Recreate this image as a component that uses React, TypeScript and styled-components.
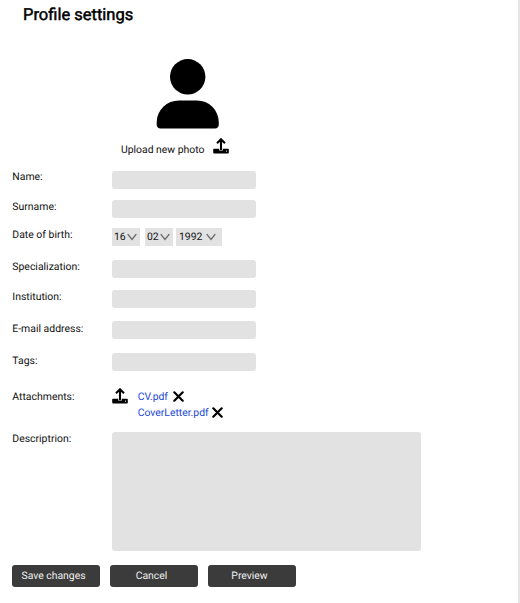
import React from "react";
import styled, { createGlobalStyle } from "styled-components";

const GlobalStyle = createGlobalStyle`
  * { box-sizing: border-box; }
  body { margin: 0; background: #fff; color: #111; font-family: Roboto, sans-serif; font-size: 10.4px; text-rendering: geometricPrecision; }
`;

const Page = styled.main`
  width: 520px;
  height: 603px;
  padding: 4px 0 0 12px;
  border-right: 2px solid #e6e6e6;
  overflow: hidden;
`;

const Title = styled.h1`
  height: 22px;
  margin: 0 0 0 11px;
  color: #000;
  font-size: 16.5px;
  font-weight: 400;
  line-height: 24px;
  -webkit-text-stroke: 0.5px #000;
`;

const PhotoSection = styled.section`
  display: flex;
  flex-direction: column;
  height: 144px;
  padding-top: 33px;
`;

const Avatar = styled.svg`
  display: block;
  width: 64px;
  height: 71px;
  margin-left: 144px;
`;

const UploadPhoto = styled.div`
  display: flex;
  align-items: flex-start;
  gap: 9px;
  margin: 8px 0 0 109px;
`;

const UploadLabel = styled.span`
  width: 83px;
  margin-top: 5px;
  line-height: 14px;
  white-space: nowrap;
`;

const Row = styled.div<{ $height: number }>`
  display: grid;
  grid-template-columns: 100px 1fr;
  align-items: start;
  height: ${({ $height }) => $height}px;
`;

const Label = styled.label<{ $drop?: number }>`
  padding-top: ${({ $drop = 1 }) => $drop}px;
  padding-left: 0.3px;
  line-height: 14px;
  font-size: 10.45px;
`;

const Input = styled.input<{ $top: number }>`
  width: 143.5px;
  height: 18px;
  margin: ${({ $top }) => $top}px 0 0;
  padding: 0 4px;
  border: 0;
  border-radius: 3px;
  background: #e2e2e2;
`;

const DateGroup = styled.div`
  display: flex;
  padding-top: 1px;
`;

const DatePart = styled.button<{ $width: number; $gap: number; $inset: number; $space: number }>`
  display: flex;
  align-items: center;
  gap: ${({ $space }) => $space}px;
  width: ${({ $width }) => $width}px;
  height: 18px;
  margin: 0 ${({ $gap }) => $gap}px 0 0;
  padding: 0 0 0 ${({ $inset }) => $inset}px;
  border: 0;
  background: #e2e2e2;
  color: #111;
  font: 10.4px/14px Roboto, sans-serif;
  text-rendering: geometricPrecision;
`;

const ChevronSvg = styled.svg`
  flex: none;
  width: 10px;
  height: 8px;
`;

const Attachments = styled.div`
  display: flex;
  align-items: flex-start;
  gap: 9.7px;
  margin-top: -1px;
`;

const FileList = styled.ul`
  margin: 1px 0 0;
  padding: 0;
  list-style: none;
`;

const FileItem = styled.li<{ $gap: number }>`
  display: flex;
  align-items: center;
  gap: ${({ $gap }) => $gap}px;
  height: 15.5px;
  color: #2148d8;
  line-height: 15px;
`;

const UploadSvg = styled.svg`
  display: block;
  flex: none;
  width: 16px;
  height: 16px;
`;

const CrossSvg = styled.svg`
  width: 11px;
  height: 11px;
`;

const Description = styled.textarea`
  width: 309px;
  height: 119px;
  margin: 1px 0 0;
  border: 0;
  border-radius: 3px;
  background: #e2e2e2;
  resize: none;
`;

const Actions = styled.div`
  display: flex;
  gap: 10px;
`;

const ActionButton = styled.button`
  width: 88px;
  height: 22px;
  padding: 0 5px 0 0;
  border: 0;
  border-radius: 3px;
  background: #3b3b3b;
  color: #f0f0f0;
  font: 10.4px/22px Roboto, sans-serif;
  text-align: center;
  text-rendering: geometricPrecision;
`;

const UploadIcon = () => (
  <UploadSvg viewBox="0 0 16 16">
    <path d="M8 12V1.8M4 5.2 8 1.3 12 5.2" fill="none" stroke="#000" strokeWidth="2.1" />
    <path
      fillRule="evenodd"
      d="M1 10.8h5.2v1.6h3.6v-1.6H15a.8.8 0 0 1 .8.8v3a.9.9 0 0 1-.9.9H1.1a.9.9 0 0 1-.9-.9v-3a.8.8 0 0 1 .8-.8Zm12.5 1.7a.6.6 0 1 0 0 1.2.6.6 0 0 0 0-1.2Z"
    />
  </UploadSvg>
);

const Chevron = () => (
  <ChevronSvg viewBox="0 0 10 8">
    <path d="M.7 1.2 5 6.5 9.3 1.2" fill="none" stroke="#666" strokeWidth="1.3" />
  </ChevronSvg>
);

const Cross = () => (
  <CrossSvg viewBox="0 0 11 11">
    <path d="m1.3 1.3 8.4 8.4m0-8.4L1.3 9.7" stroke="#000" strokeWidth="2.2" strokeLinecap="round" />
  </CrossSvg>
);

interface FieldProps {
  name: string;
  height: number;
  top: number;
  drop?: number;
}

const Field = ({ name, height, top, drop }: FieldProps) => (
  <Row $height={height}>
    <Label htmlFor={name} $drop={drop}>{name}:</Label>
    <Input id={name} $top={top} />
  </Row>
);

export default function App() {
  return (
    <>
      <GlobalStyle />
      <Page>
        <Title>Profile settings</Title>
        <PhotoSection>
          <Avatar viewBox="0 0 64 71">
            <circle cx="31.7" cy="17.8" r="17.7" />
            <path d="M23 41.4h18A22 22 0 0 1 62.8 63.2v2.5a3.7 3.7 0 0 1-4 3.8H4.7a3.7 3.7 0 0 1-4-3.8V63.2A22.2 22 0 0 1 23 41.4Z" />
          </Avatar>
          <UploadPhoto>
            <UploadLabel>Upload new photo</UploadLabel>
            <UploadIcon />
          </UploadPhoto>
        </PhotoSection>
        <Field name="Name" height={30} top={1} drop={0} />
        <Field name="Surname" height={27} top={0.4} drop={0} />
        <Row $height={32}>
          <Label>Date of birth:</Label>
          <DateGroup>
            <DatePart $width={28} $gap={5} $inset={2} $space={1.5}>16<Chevron /></DatePart>
            <DatePart $width={28} $gap={3} $inset={2} $space={1.5}>02<Chevron /></DatePart>
            <DatePart $width={45.5} $gap={0} $inset={3} $space={4}>1992<Chevron /></DatePart>
          </DateGroup>
        </Row>
        <Field name="Specialization" height={30} top={1} />
        <Field name="Institution" height={32} top={1} />
        <Field name="E-mail address" height={32} top={0.4} />
        <Field name="Tags" height={36} top={0.4} />
        <Row $height={42}>
          <Label>Attachments:</Label>
          <Attachments>
            <UploadIcon />
            <FileList>
              <FileItem $gap={5.5}>CV.pdf<Cross /></FileItem>
              <FileItem $gap={3}>CoverLetter.pdf<Cross /></FileItem>
            </FileList>
          </Attachments>
        </Row>
        <Row $height={134}>
          <Label htmlFor="description">Descriptrion:</Label>
          <Description id="description" />
        </Row>
        <Actions>
          <ActionButton>Save changes</ActionButton>
          <ActionButton>Cancel</ActionButton>
          <ActionButton>Preview</ActionButton>
        </Actions>
      </Page>
    </>
  );
}
